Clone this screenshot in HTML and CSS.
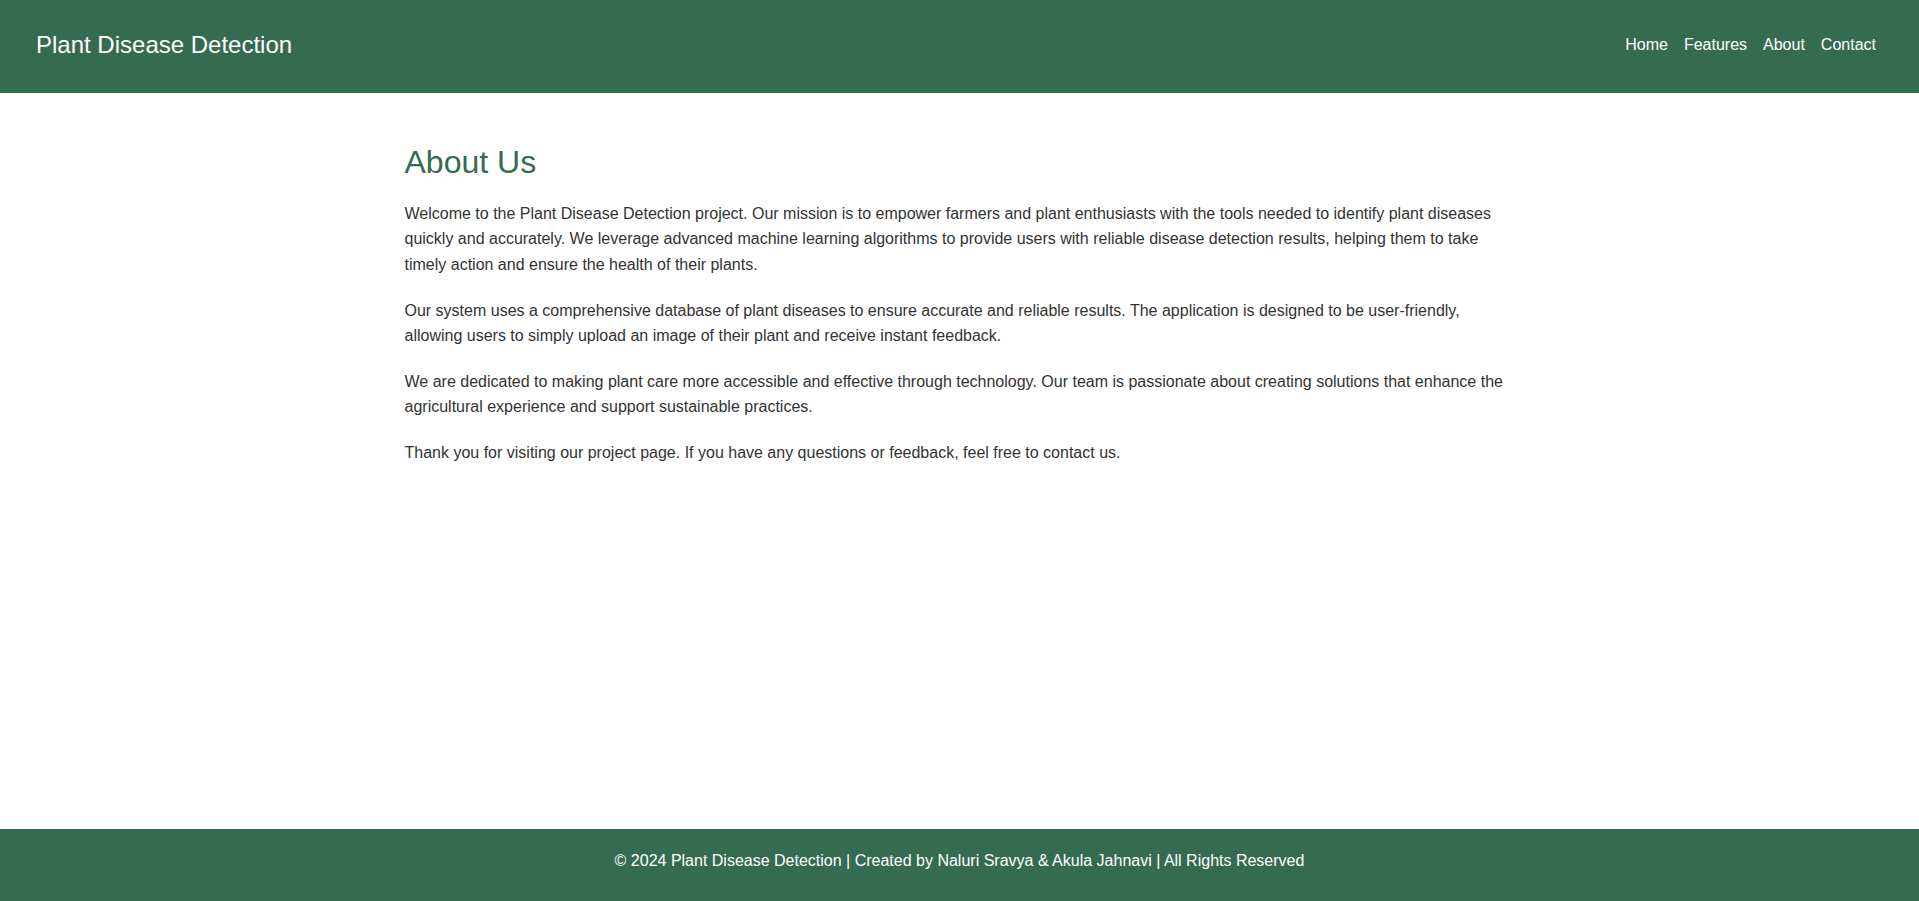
FILE: index.html
```html
<!DOCTYPE html>
<html lang="en">
<head>
<meta charset="utf-8">
<title>About - Plant Disease Detection</title>
<link rel="stylesheet" href="styles.css">
</head>
<body>
<header class="site-header">
  <div class="brand">Plant Disease Detection</div>
  <nav class="nav">
    <a href="#">Home</a>
    <a href="#">Features</a>
    <a href="#">About</a>
    <a href="#">Contact</a>
  </nav>
</header>
<main class="content">
  <h2 class="title">About Us</h2>
  <p>Welcome to the Plant Disease Detection project. Our mission is to empower farmers and plant enthusiasts with the tools needed to identify plant diseases quickly and accurately. We leverage advanced machine learning algorithms to provide users with reliable disease detection results, helping them to take timely action and ensure the health of their plants.</p>
  <p>Our system uses a comprehensive database of plant diseases to ensure accurate and reliable results. The application is designed to be user-friendly, allowing users to simply upload an image of their plant and receive instant feedback.</p>
  <p>We are dedicated to making plant care more accessible and effective through technology. Our team is passionate about creating solutions that enhance the agricultural experience and support sustainable practices.</p>
  <p>Thank you for visiting our project page. If you have any questions or feedback, feel free to contact us.</p>
</main>
<footer class="site-footer">
  <p>&copy; 2024 Plant Disease Detection | Created by Naluri Sravya &amp; Akula Jahnavi | All Rights Reserved</p>
</footer>
</body>
</html>
```

FILE: styles.css
```css
* { box-sizing: border-box; }

html, body {
  margin: 0;
  padding: 0;
}

body {
  font-family: "Liberation Sans", Arial, sans-serif;
  color: #333;
  background: #fff;
  min-height: 100vh;
  display: flex;
  flex-direction: column;
}

.site-header {
  background: #356b51;
  color: #fff;
  height: 93px;
  padding: 0 35px 3px 36px;
  display: flex;
  align-items: center;
  justify-content: space-between;
}

.brand {
  font-size: 24px;
  line-height: 1.15;
}

.nav {
  display: flex;
}

.nav a {
  color: #fff;
  text-decoration: none;
  font-size: 16px;
  margin: 0 8px;
}

.content {
  flex: 1;
  width: 1110px;
  margin: 0 auto;
  padding-top: 51px;
}

.title {
  color: #356b51;
  font-size: 32px;
  font-weight: normal;
  line-height: 1.15;
  margin: 0 0 20px;
}

.content p {
  font-size: 16px;
  line-height: 1.6;
  margin: 0 0 20px;
}

.site-footer {
  background: #356b51;
  color: #fff;
  text-align: center;
  height: 72px;
  padding-top: 20px;
}

.site-footer p {
  margin: 0;
  font-size: 16px;
  line-height: 24px;
}
```
